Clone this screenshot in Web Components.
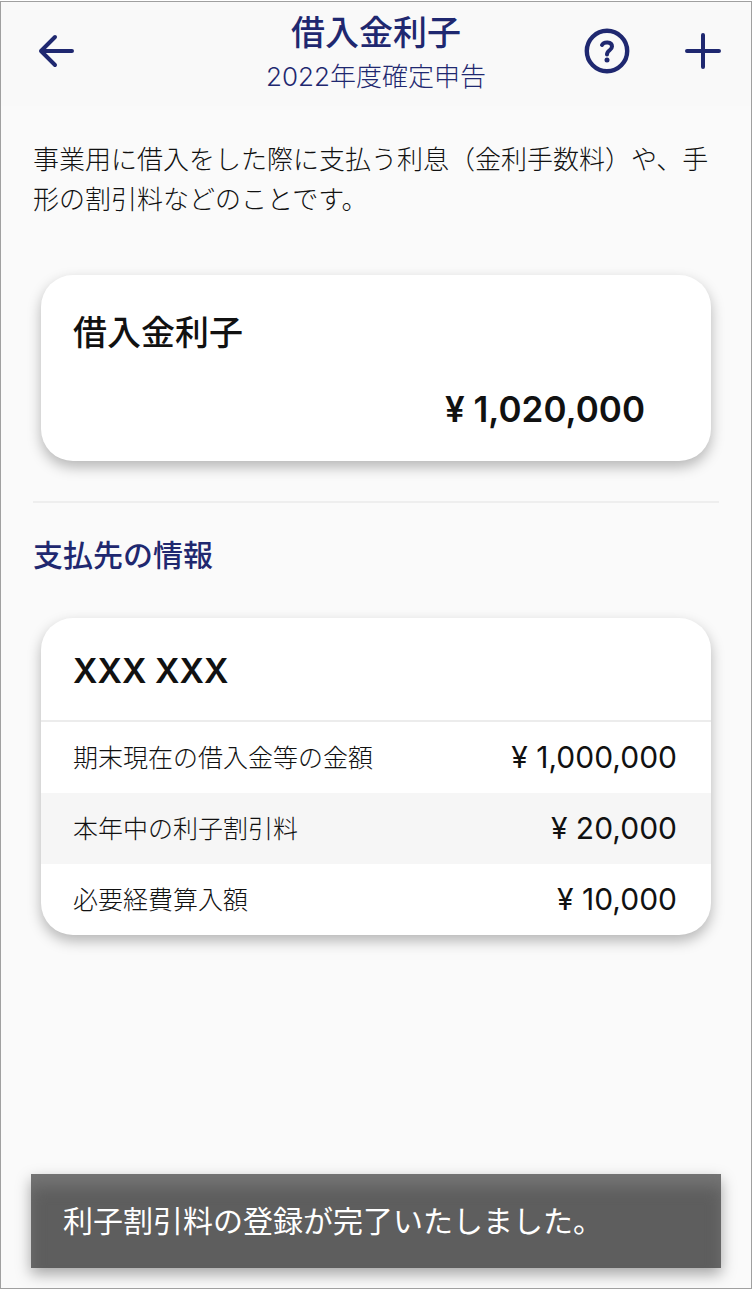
<!DOCTYPE html>
<html lang="ja">
<head>
<meta charset="UTF-8">
<meta name="viewport" content="width=device-width, initial-scale=1">
<title>借入金利子</title>
<style>
  body {
    margin: 0;
    background: #fff;
  }
</style>
</head>
<body>
<interest-app></interest-app>

<script>
class AppHeader extends HTMLElement {
  connectedCallback() {
    this.attachShadow({ mode: 'open' });
    this.shadowRoot.innerHTML = `
      <style>
        :host {
          display: block;
        }

        header {
          display: grid;
          grid-template-columns: 1fr auto 1fr;
          height: 104px;
          padding: 0 16px;
          color: var(--navy);
          background: #f9f9f9;
        }

        .titles {
          text-align: center;
          padding-top: 8px;
        }

        h1 {
          margin: 0;
          font-size: 34px;
          line-height: 46px;
          font-weight: 500;
        }

        p {
          margin: 0;
          font-size: 26px;
          line-height: 42px;
          font-weight: 300;
        }

        .side {
          display: flex;
          gap: 32px;
          padding-top: 16px;
        }

        .left {
          padding-left: 8px;
        }

        .right {
          justify-content: flex-end;
        }

        button {
          width: 64px;
          height: 64px;
          padding: 0;
          border: 0;
          background: none;
          color: inherit;
          cursor: pointer;
        }

        svg {
          display: block;
          width: 64px;
          height: 64px;
          fill: none;
          stroke: currentColor;
          stroke-width: 4;
          stroke-linecap: round;
          stroke-linejoin: round;
        }
      </style>

      <header>
        <div class="side left">
          <button type="button" aria-label="戻る">
            <svg viewBox="0 0 64 64"><path d="M47 33H16M30 19L16 33L30 47"/></svg>
          </button>
        </div>
        <div class="titles">
          <h1><slot></slot></h1>
          <p><slot name="sub"></slot></p>
        </div>
        <div class="side right">
          <button type="button" aria-label="ヘルプ">
            <svg viewBox="0 0 64 64">
              <circle cx="32" cy="33" r="20.2" stroke-width="4.4"/>
              <path d="M27 27C28.500 23.600 37 23 37 28.500C37 32.500 32 32 32 36.500"/>
              <circle cx="32" cy="42" r="2.500" fill="currentColor" stroke="none"/>
            </svg>
          </button>
          <button type="button" aria-label="追加">
            <svg viewBox="0 0 64 64"><path d="M16 33H48M32 17V49"/></svg>
          </button>
        </div>
      </header>
    `;
  }
}

class AppCard extends HTMLElement {
  connectedCallback() {
    this.attachShadow({ mode: 'open' });
    this.shadowRoot.innerHTML = `
      <style>
        :host {
          display: block;
          margin: 0 8px;
          background: #fff;
          border-radius: 32px;
          box-shadow: 0 6px 14px rgba(0, 0, 0, 0.28);
          overflow: hidden;
        }
      </style>
      <slot></slot>
    `;
  }
}

class TotalCard extends HTMLElement {
  connectedCallback() {
    this.attachShadow({ mode: 'open' });
    this.shadowRoot.innerHTML = `
      <style>
        :host {
          display: block;
        }

        .body {
          padding: 35px 32px 30px;
        }

        h2 {
          margin: 0;
          font-size: 34px;
          line-height: 46px;
          font-weight: 500;
        }

        p {
          margin: 31px 34px 0 0;
          font-size: 35px;
          line-height: 44px;
          font-weight: 600;
          text-align: right;
        }
      </style>

      <app-card>
        <div class="body">
          <h2>${this.getAttribute('label')}</h2>
          <p>${this.getAttribute('amount')}</p>
        </div>
      </app-card>
    `;
  }
}

class PayeeCard extends HTMLElement {
  connectedCallback() {
    const rows = [
      ['期末現在の借入金等の金額', '¥ 1,000,000'],
      ['本年中の利子割引料', '¥ 20,000'],
      ['必要経費算入額', '¥ 10,000']
    ];

    this.attachShadow({ mode: 'open' });
    this.shadowRoot.innerHTML = `
      <style>
        :host {
          display: block;
        }

        h3 {
          margin: 0;
          padding: 31px 32px 27px;
          font-size: 34px;
          line-height: 44px;
          font-weight: 600;
          border-bottom: 2px solid #ececec;
        }

        table {
          width: 100%;
          border-collapse: collapse;
        }

        tr:nth-child(even) {
          background: #f6f6f6;
        }

        th, td {
          height: 71px;
          box-sizing: border-box;
          white-space: nowrap;
        }

        th {
          padding: 0 0 4px 32px;
          font-size: 25px;
          font-weight: 300;
          text-align: left;
        }

        td {
          padding: 0 34px 2px 0;
          font-size: 30px;
          font-weight: 400;
          text-align: right;
        }
      </style>

      <app-card>
        <h3>${this.getAttribute('name')}</h3>
        <table>
          ${rows.map(([label, value]) => `<tr><th scope="row">${label}</th><td>${value}</td></tr>`).join('')}
        </table>
      </app-card>
    `;
  }
}

class AppToast extends HTMLElement {
  connectedCallback() {
    this.attachShadow({ mode: 'open' });
    this.shadowRoot.innerHTML = `
      <style>
        :host {
          display: block;
          padding: 24px 32px;
          font-size: 30px;
          line-height: 46px;
          color: #fff;
          background: #5e5e5e;
          box-shadow: 0 6px 14px rgba(0, 0, 0, 0.35), inset 0 14px 16px -2px #757575;
        }
      </style>
      <div role="status"><slot></slot></div>
    `;
  }
}

class InterestApp extends HTMLElement {
  connectedCallback() {
    this.attachShadow({ mode: 'open' });
    this.shadowRoot.innerHTML = `
      <style>
        :host {
          --navy: #1f2870;
          display: flex;
          box-sizing: border-box;
          min-height: 100vh;
          padding: 1px 0;
          color: #111;
          font-family: Inter, "Noto Sans CJK JP", sans-serif;
        }

        .screen {
          flex: 1;
          position: relative;
          box-sizing: border-box;
          border: 1px solid #a0a0a0;
          background: #fafafa;
          overflow: hidden;
        }

        main {
          padding: 34px 32px 140px;
        }

        .lead {
          margin: 0 0 55px;
          font-size: 26px;
          line-height: 40px;
          font-weight: 300;
        }

        hr {
          height: 2px;
          margin: 40px 0 30px;
          border: 0;
          background: #eee;
        }

        h2 {
          margin: 0 0 41px;
          font-size: 30px;
          line-height: 44px;
          font-weight: 500;
          color: var(--navy);
        }

        /* floats over the bottom of the screen */
        app-toast {
          position: absolute;
          left: 30px;
          right: 30px;
          bottom: 20px;
        }
      </style>

      <div class="screen">
        <app-header>借入金利子<span slot="sub">2022年度確定申告</span></app-header>
        <main>
          <p class="lead">事業用に借入をした際に支払う利息（金利手数料）や、手形の割引料などのことです。</p>
          <total-card label="借入金利子" amount="¥ 1,020,000"></total-card>
          <hr>
          <h2>支払先の情報</h2>
          <payee-card name="XXX XXX"></payee-card>
        </main>
        <app-toast>利子割引料の登録が完了いたしました。</app-toast>
      </div>
    `;
  }
}

customElements.define('app-header', AppHeader);
customElements.define('app-card', AppCard);
customElements.define('total-card', TotalCard);
customElements.define('payee-card', PayeeCard);
customElements.define('app-toast', AppToast);
customElements.define('interest-app', InterestApp);
</script>
</body>
</html>
